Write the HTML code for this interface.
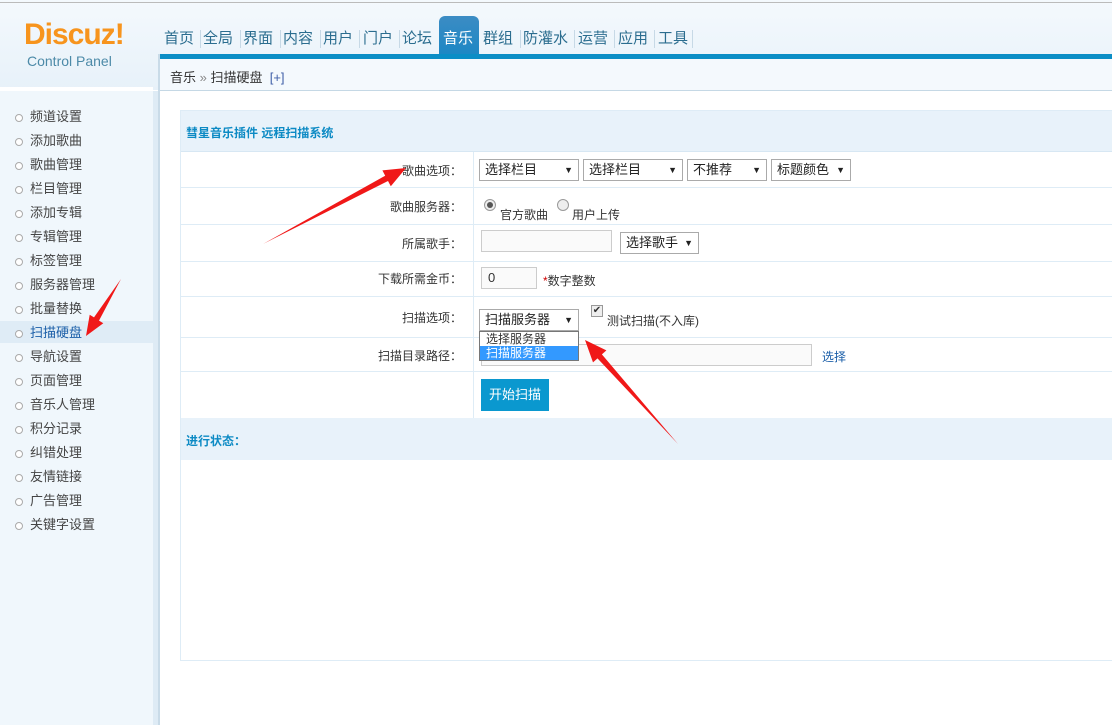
<!DOCTYPE html>
<html><head><meta charset="utf-8"><style>
*{margin:0;padding:0;box-sizing:border-box}
body{width:1112px;height:725px;overflow:hidden;background:#fff;font-family:"Liberation Sans","Noto Sans CJK SC",sans-serif;font-size:12px;color:#333;position:relative}
.a{position:absolute}
.nav span{position:absolute;top:28px;font-size:15px;color:#2b6d8f;height:24px;line-height:22px}
.nav i{position:absolute;top:30px;width:1px;height:18px;background:#c7d9e6}
.sb div{position:absolute;left:0;width:153px;height:22px;line-height:22px;font-size:13px;color:#444;padding-left:30px}
.sb div:before{content:"";position:absolute;left:15px;top:8px;width:6px;height:6px;border:1px solid #aaa;border-radius:50%;background:#fff}
.row{position:absolute;left:181px;width:931px;border-bottom:1px solid #deecf6}
.lab{position:absolute;right:650px;font-size:12px;color:#333}
.sel{position:absolute;height:22px;border:1px solid #aaa;background:#fff;font-size:13px;line-height:20px;padding-left:5px;color:#222}
.sel:after{content:"▼";position:absolute;right:5px;top:0;font-size:9px}
.inp{position:absolute;height:22px;border:1px solid #ccc;background:#fafafa}
</style></head><body>
<div class="a" style="left:0;top:0;width:1112px;height:90px;background:linear-gradient(#f4f9fd,#e7f1f9)"></div>
<div class="a" style="left:0;top:2px;width:1112px;height:1px;background:#bbb"></div>
<div class="a" style="left:24px;top:18px;font-size:30px;font-weight:bold;color:#f7941d;letter-spacing:-1px">Discuz!</div>
<div class="a" style="left:27px;top:53px;font-size:14px;color:#4c8aa8">Control Panel</div>
<div class="a" style="left:0;top:87px;width:153px;height:3px;background:#fff"></div>
<div class="a" style="left:439px;top:16px;width:40px;height:42px;background:linear-gradient(#3c8cc4,#1a87c4);border-radius:6px 6px 0 0"></div>
<div class="nav">
<span style="left:164px">首页</span><span style="left:203px">全局</span><span style="left:243px">界面</span><span style="left:283px">内容</span><span style="left:323px">用户</span><span style="left:363px">门户</span><span style="left:402px">论坛</span><span style="left:443px;color:#fff">音乐</span><span style="left:483px">群组</span><span style="left:523px">防灌水</span><span style="left:578px">运营</span><span style="left:618px">应用</span><span style="left:658px">工具</span>
<i style="left:200px"></i><i style="left:240px"></i><i style="left:280px"></i><i style="left:320px"></i><i style="left:359px"></i><i style="left:399px"></i><i style="left:520px"></i><i style="left:574px"></i><i style="left:614px"></i><i style="left:654px"></i><i style="left:692px"></i>
</div>
<div class="a" style="left:158px;top:54px;width:954px;height:5px;background:#0b8ec6"></div>
<div class="a" style="left:158px;top:59px;width:954px;height:32px;background:#f4f9fd;border-bottom:1px solid #c5d8e5"></div>
<div class="a" style="left:158px;top:54px;width:2px;height:671px;background:#c9dbe8"></div>
<div class="a" style="left:170px;top:67px;font-size:13px;color:#333">音乐 <span style="color:#888">»</span> 扫描硬盘 &nbsp;<span style="color:#3f5fa8">[+]</span></div>
<div class="a" style="left:0;top:91px;width:153px;height:634px;background:#f0f7fc"></div>
<div class="a" style="left:153px;top:91px;width:5px;height:634px;background:#deebf5"></div>
<div class="a" style="left:0;top:321px;width:153px;height:22px;background:#dfecf6"></div>
<div class="sb">
<div style="top:106px">频道设置</div><div style="top:130px">添加歌曲</div><div style="top:154px">歌曲管理</div><div style="top:178px">栏目管理</div><div style="top:202px">添加专辑</div><div style="top:226px">专辑管理</div><div style="top:250px">标签管理</div><div style="top:274px">服务器管理</div><div style="top:298px">批量替换</div><div style="top:322px;color:#1a5ea8">扫描硬盘</div><div style="top:346px">导航设置</div><div style="top:370px">页面管理</div><div style="top:394px">音乐人管理</div><div style="top:418px">积分记录</div><div style="top:442px">纠错处理</div><div style="top:466px">友情链接</div><div style="top:490px">广告管理</div><div style="top:514px">关键字设置</div>
</div>
<div class="a" style="left:180px;top:110px;width:932px;height:551px;border:1px solid #deecf6;border-right:none"></div>
<div class="a" style="left:181px;top:111px;width:931px;height:41px;background:#e8f2fa;border-bottom:1px solid #d7e7f3"></div>
<div class="a" style="left:186px;top:124px;font-size:12px;font-weight:bold;color:#0c8ac4">彗星音乐插件 远程扫描系统</div>
<div class="row" style="top:152px;height:36px"></div>
<div class="row" style="top:188px;height:37px"></div>
<div class="row" style="top:225px;height:37px"></div>
<div class="row" style="top:262px;height:35px"></div>
<div class="row" style="top:297px;height:41px"></div>
<div class="row" style="top:338px;height:34px"></div>
<div class="a" style="left:473px;top:152px;width:1px;height:266px;background:#deecf6"></div>
<div class="a" style="left:181px;top:418px;width:931px;height:42px;background:#e8f2fa"></div>
<div class="a" style="left:186px;top:432px;font-size:12px;font-weight:bold;color:#0c8ac4">进行状态：</div>
<div class="lab" style="top:162px">歌曲选项：</div>
<div class="lab" style="top:198px">歌曲服务器：</div>
<div class="lab" style="top:235px">所属歌手：</div>
<div class="lab" style="top:270px">下载所需金币：</div>
<div class="lab" style="top:309px">扫描选项：</div>
<div class="lab" style="top:347px">扫描目录路径：</div>
<div class="sel" style="left:479px;top:159px;width:100px">选择栏目</div>
<div class="sel" style="left:583px;top:159px;width:100px">选择栏目</div>
<div class="sel" style="left:687px;top:159px;width:80px">不推荐</div>
<div class="sel" style="left:771px;top:159px;width:80px">标题颜色</div>
<div class="a" style="left:484px;top:199px;width:12px;height:12px;border:1px solid #999;border-radius:50%;background:#eee"><div style="margin:2px;width:6px;height:6px;border-radius:50%;background:#555"></div></div>
<div class="a" style="left:500px;top:206px">官方歌曲</div>
<div class="a" style="left:557px;top:199px;width:12px;height:12px;border:1px solid #999;border-radius:50%;background:#eee"></div>
<div class="a" style="left:572px;top:206px">用户上传</div>
<div class="inp" style="left:481px;top:230px;width:131px"></div>
<div class="sel" style="left:620px;top:232px;width:79px">选择歌手</div>
<div class="inp" style="left:481px;top:267px;width:56px;font-size:13px;line-height:20px;padding-left:6px">0</div>
<div class="a" style="left:543px;top:272px;font-size:12px"><span style="color:#c00">*</span>数字整数</div>
<div class="sel" style="left:479px;top:309px;width:100px">扫描服务器</div>
<div class="a" style="left:591px;top:305px;width:12px;height:12px;border:1px solid #999;background:#eee;font-size:10px;line-height:10px;text-align:center">✔</div>
<div class="a" style="left:607px;top:312px">测试扫描(不入库)</div>
<div class="inp" style="left:481px;top:344px;width:331px"></div>
<div class="a" style="left:822px;top:348px;color:#1a5ea8;font-size:12px">选择</div>
<div class="a" style="left:479px;top:331px;width:100px;height:30px;border:1px solid #777;background:#fff;font-size:12px;line-height:14px">
<div style="padding-left:6px">选择服务器</div><div style="padding-left:6px;background:#3399ff;color:#fff">扫描服务器</div></div>
<div class="a" style="left:481px;top:379px;width:68px;height:32px;background:#0a98cf;color:#fff;font-size:13px;line-height:32px;text-align:center">开始扫描</div>
<svg class="a" style="left:0;top:0" width="1112" height="725">
<polygon points="263,244 385.2,175.7 382.4,170.4 406,168 390.8,186.2 388,181" fill="#f01818"/>
<polygon points="121,279 94,317.4 89.7,314.8 86,336 103.3,323.2 99,320.6" fill="#f01818"/>
<polygon points="678,444 597.5,358.4 593,362.4 585,340 606.4,350.4 601.9,354.4" fill="#f01818"/>
</svg>
</body></html>
